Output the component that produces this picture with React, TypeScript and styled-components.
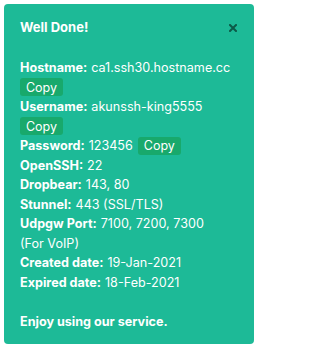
import React from "react";
import styled, { createGlobalStyle } from "styled-components";

const Global = createGlobalStyle`
  html, body { margin: 0; padding: 0; background: #ffffff; }
  body { font-family: Inter, "Open Sans", "Liberation Sans", sans-serif; }
`;

const Panel = styled.div`
  margin: 4px;
  width: 250px;
  height: 340px;
  box-sizing: border-box;
  padding: 14px 16px 16px 16px;
  background: #1dba97;
  border-radius: 4px;
  color: #ffffff;
  font-size: 12.6px;
  line-height: 19.5px;
  position: relative;
`;

const Title = styled.div`
  font-size: 13px;
  font-weight: 700;
  margin-bottom: 20.5px;
`;

const Close = styled.button`
  position: absolute;
  top: 19px;
  right: 16px;
  width: 10px;
  height: 10px;
  padding: 0;
  border: 0;
  background: transparent;
  display: flex;
  align-items: center;
  justify-content: center;
`;

const Line = styled.div`
  height: 19.5px;
  display: flex;
  align-items: center;
  white-space: nowrap;
`;

const Label = styled.b`
  font-weight: 700;
  margin-right: 4px;
`;

const CopyButton = styled.span<{ $inline?: boolean }>`
  display: inline-flex;
  align-items: center;
  justify-content: center;
  width: 43px;
  height: 18px;
  margin-left: ${(p) => (p.$inline ? "5px" : "0")};
  background: #18a96c;
  border-radius: 3px;
  font-size: 12.5px;
  color: #ffffff;
`;

const Spacer = styled.div`
  height: 19.5px;
`;

const rows: [string, string][] = [
  ["OpenSSH:", "22"],
  ["Dropbear:", "143, 80"],
  ["Stunnel:", "443 (SSL/TLS)"],
  ["Udpgw Port:", "7100, 7200, 7300"],
];

export default function App() {
  return (
    <>
      <Global />
      <Panel>
        <Title>Well Done!</Title>
        <Close aria-label="close">
          <svg width="8" height="8" viewBox="0 0 8 8">
            <path d="M1 1 L7 7 M7 1 L1 7" stroke="#0c5a48" strokeWidth="2" strokeLinecap="square" />
          </svg>
        </Close>
        <Line>
          <Label>Hostname:</Label>ca1.ssh30.hostname.cc
        </Line>
        <Line>
          <CopyButton>Copy</CopyButton>
        </Line>
        <Line>
          <Label>Username:</Label>akunssh-king5555
        </Line>
        <Line>
          <CopyButton>Copy</CopyButton>
        </Line>
        <Line>
          <Label>Password:</Label>123456
          <CopyButton $inline>Copy</CopyButton>
        </Line>
        {rows.map(([l, v]) => (
          <Line key={l}>
            <Label>{l}</Label>
            {v}
          </Line>
        ))}
        <Line>(For VoIP)</Line>
        <Line>
          <Label>Created date:</Label>19-Jan-2021
        </Line>
        <Line>
          <Label>Expired date:</Label>18-Feb-2021
        </Line>
        <Spacer />
        <Line>
          <Label>Enjoy using our service.</Label>
        </Line>
      </Panel>
    </>
  );
}
